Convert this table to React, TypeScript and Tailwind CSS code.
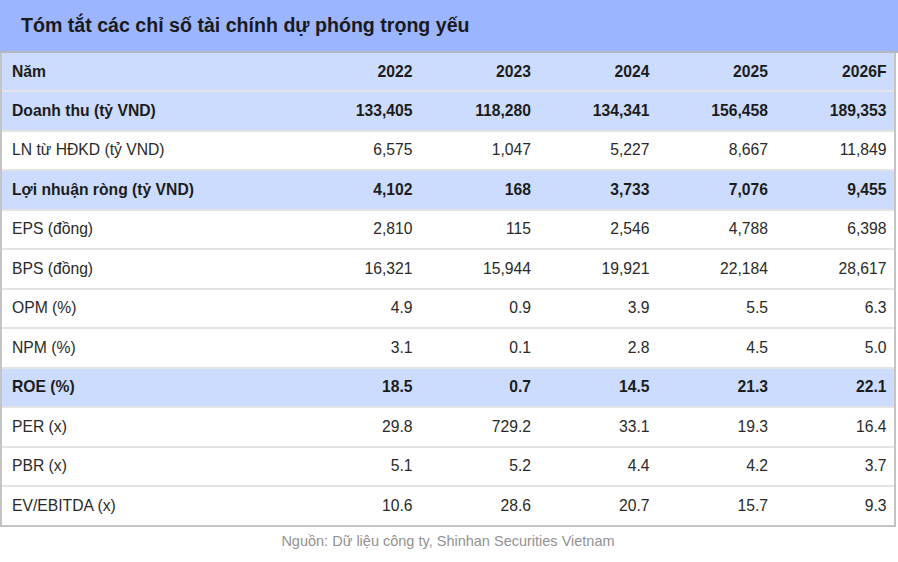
const years = ['2022', '2023', '2024', '2025', '2026F'];

interface Row {
  label: string;
  values: string[];
  bold?: boolean;
}

const rows: Row[] = [
  { label: 'Doanh thu (tỷ VND)', values: ['133,405', '118,280', '134,341', '156,458', '189,353'], bold: true },
  { label: 'LN từ HĐKD (tỷ VND)', values: ['6,575', '1,047', '5,227', '8,667', '11,849'] },
  { label: 'Lợi nhuận ròng (tỷ VND)', values: ['4,102', '168', '3,733', '7,076', '9,455'], bold: true },
  { label: 'EPS (đồng)', values: ['2,810', '115', '2,546', '4,788', '6,398'] },
  { label: 'BPS (đồng)', values: ['16,321', '15,944', '19,921', '22,184', '28,617'] },
  { label: 'OPM (%)', values: ['4.9', '0.9', '3.9', '5.5', '6.3'] },
  { label: 'NPM (%)', values: ['3.1', '0.1', '2.8', '4.5', '5.0'] },
  { label: 'ROE (%)', values: ['18.5', '0.7', '14.5', '21.3', '22.1'], bold: true },
  { label: 'PER (x)', values: ['29.8', '729.2', '33.1', '19.3', '16.4'] },
  { label: 'PBR (x)', values: ['5.1', '5.2', '4.4', '4.2', '3.7'] },
  { label: 'EV/EBITDA (x)', values: ['10.6', '28.6', '20.7', '15.7', '9.3'] },
];

function TableRow({ label, values, bold, last }: Row & { last?: boolean }) {
  return (
    <div
      className={`grid grid-cols-[303px_repeat(5,118.5px)] h-[39.5px] items-center text-[15.7px] ${
        bold ? 'bg-[#ccdcfe] font-bold text-[#1c1c1c]' : 'bg-white text-[#2a2a2a]'
      } ${last ? 'border-b-2 border-[#c4c4c4]' : 'border-b-2 border-[#e4e4e4]'}`}
    >
      <div className="pl-[10px]">{label}</div>
      {values.map((v, i) => (
        <div key={i} className="text-right pr-[11px]">{v}</div>
      ))}
    </div>
  );
}

export default function App() {
  return (
    <div className="w-[898px] h-[562px] bg-white font-['Liberation_Sans',Arial,sans-serif]">
      <div className="h-[53px] bg-[#9bb5fe] flex items-center pl-[21px] border-b-2 border-[#b4b8c4]">
        <h1 className="text-[19.6px] font-bold text-[#1a1a1a]">Tóm tắt các chỉ số tài chính dự phóng trọng yếu</h1>
      </div>
      <div className="w-[896px] border-l-2 border-r-2 border-[#c4c4c4]">
        <div className="grid grid-cols-[303px_repeat(5,118.5px)] h-[39px] items-center text-[15.7px] font-bold bg-[#ccdcfe] text-[#1c1c1c] border-b-2 border-[#e4e4e4]">
          <div className="pl-[10px]">Năm</div>
          {years.map(y => (
            <div key={y} className="text-right pr-[11px]">{y}</div>
          ))}
        </div>
        {rows.map((r, i) => (
          <TableRow key={r.label} {...r} last={i === rows.length - 1} />
        ))}
      </div>
      <p className="text-center text-[14.5px] text-[#929292] mt-[4px] pr-[2px]">
        Nguồn: Dữ liệu công ty, Shinhan Securities Vietnam
      </p>
    </div>
  );
}
